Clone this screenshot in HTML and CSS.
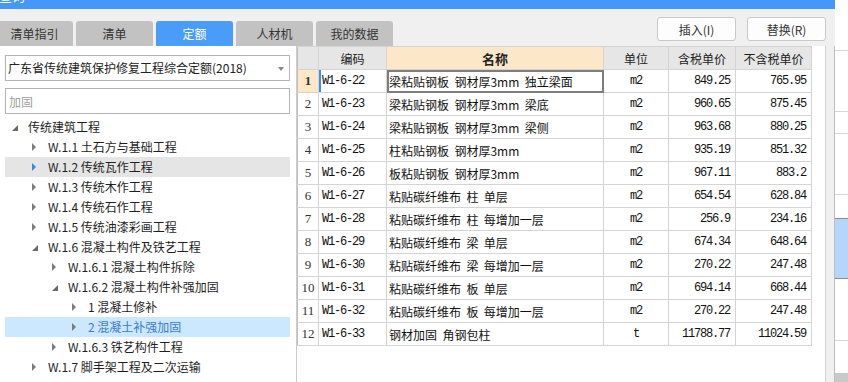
FILE: index.html
```html
<!DOCTYPE html>
<html lang="zh-CN">
<head>
  <meta charset="UTF-8">
  <title>定额查询</title>
  <link rel="stylesheet" href="styles.css">
</head>
<body>
  <div class="window">
    <div class="titlebar"><span class="title">查询</span></div>
    <div class="toolbar">
      <div class="tabs">
        <div class="tab">清单指引</div>
        <div class="tab">清单</div>
        <div class="tab active">定额</div>
        <div class="tab">人材机</div>
        <div class="tab">我的数据</div>
      </div>
      <div class="actions">
        <button class="btn">插入(I)</button>
        <button class="btn">替换(R)</button>
      </div>
    </div>
    <div class="main">
      <div class="side">
        <div class="select">广东省传统建筑保护修复工程综合定额(2018)<span class="caret"></span></div>
        <input class="search" placeholder="加固">
        <ul class="tree">
          <li class="node lv0"><span class="tw open"></span>传统建筑工程</li>
          <li class="node lv1"><span class="tw"></span>W.1.1 土石方与基础工程</li>
          <li class="node lv1 hover"><span class="tw"></span>W.1.2 传统瓦作工程</li>
          <li class="node lv1"><span class="tw"></span>W.1.3 传统木作工程</li>
          <li class="node lv1"><span class="tw"></span>W.1.4 传统石作工程</li>
          <li class="node lv1"><span class="tw"></span>W.1.5 传统油漆彩画工程</li>
          <li class="node lv1"><span class="tw open"></span>W.1.6 混凝土构件及铁艺工程</li>
          <li class="node lv2"><span class="tw"></span>W.1.6.1 混凝土构件拆除</li>
          <li class="node lv2"><span class="tw open"></span>W.1.6.2 混凝土构件补强加固</li>
          <li class="node lv3"><span class="tw"></span>1 混凝土修补</li>
          <li class="node lv3 selected"><span class="tw"></span>2 混凝土补强加固</li>
          <li class="node lv2"><span class="tw"></span>W.1.6.3 铁艺构件工程</li>
          <li class="node lv1"><span class="tw"></span>W.1.7 脚手架工程及二次运输</li>
        </ul>
      </div>
      <div class="grid-wrap">
        <table class="grid">
          <colgroup>
            <col class="c-no"><col class="c-code"><col class="c-name"><col class="c-unit"><col class="c-tax"><col class="c-net">
          </colgroup>
          <thead>
            <tr><th></th><th>编码</th><th class="h-name">名称</th><th>单位</th><th>含税单价</th><th>不含税单价</th></tr>
          </thead>
          <tbody>
            <tr class="current"><td class="no">1</td><td class="code">W1-6-22</td><td class="name">梁粘贴钢板&nbsp; 钢材厚3mm&nbsp; 独立梁面</td><td class="unit">m2</td><td class="num">849.25</td><td class="num">765.95</td></tr>
            <tr><td class="no">2</td><td class="code">W1-6-23</td><td class="name">梁粘贴钢板&nbsp; 钢材厚3mm&nbsp; 梁底</td><td class="unit">m2</td><td class="num">960.65</td><td class="num">875.45</td></tr>
            <tr><td class="no">3</td><td class="code">W1-6-24</td><td class="name">梁粘贴钢板&nbsp; 钢材厚3mm&nbsp; 梁侧</td><td class="unit">m2</td><td class="num">963.68</td><td class="num">880.25</td></tr>
            <tr><td class="no">4</td><td class="code">W1-6-25</td><td class="name">柱粘贴钢板&nbsp; 钢材厚3mm</td><td class="unit">m2</td><td class="num">935.19</td><td class="num">851.32</td></tr>
            <tr><td class="no">5</td><td class="code">W1-6-26</td><td class="name">板粘贴钢板&nbsp; 钢材厚3mm</td><td class="unit">m2</td><td class="num">967.11</td><td class="num">883.2</td></tr>
            <tr><td class="no">6</td><td class="code">W1-6-27</td><td class="name">粘贴碳纤维布&nbsp; 柱&nbsp; 单层</td><td class="unit">m2</td><td class="num">654.54</td><td class="num">628.84</td></tr>
            <tr><td class="no">7</td><td class="code">W1-6-28</td><td class="name">粘贴碳纤维布&nbsp; 柱&nbsp; 每增加一层</td><td class="unit">m2</td><td class="num">256.9</td><td class="num">234.16</td></tr>
            <tr><td class="no">8</td><td class="code">W1-6-29</td><td class="name">粘贴碳纤维布&nbsp; 梁&nbsp; 单层</td><td class="unit">m2</td><td class="num">674.34</td><td class="num">648.64</td></tr>
            <tr><td class="no">9</td><td class="code">W1-6-30</td><td class="name">粘贴碳纤维布&nbsp; 梁&nbsp; 每增加一层</td><td class="unit">m2</td><td class="num">270.22</td><td class="num">247.48</td></tr>
            <tr><td class="no">10</td><td class="code">W1-6-31</td><td class="name">粘贴碳纤维布&nbsp; 板&nbsp; 单层</td><td class="unit">m2</td><td class="num">694.14</td><td class="num">668.44</td></tr>
            <tr><td class="no">11</td><td class="code">W1-6-32</td><td class="name">粘贴碳纤维布&nbsp; 板&nbsp; 每增加一层</td><td class="unit">m2</td><td class="num">270.22</td><td class="num">247.48</td></tr>
            <tr><td class="no">12</td><td class="code">W1-6-33</td><td class="name">钢材加固&nbsp; 角钢包柱</td><td class="unit">t</td><td class="num">11788.77</td><td class="num">11024.59</td></tr>
          </tbody>
        </table>
      </div>
      <div class="gutter"></div>
    </div>
  </div>
  <div class="peek">
    <div class="pk pk-a"></div>
    <div class="pk pk-b"></div>
    <div class="pk pk-c"></div>
    <div class="pk pk-d"></div>
    <div class="pk pk-e"></div>
    <div class="pk pk-sel"></div>
    <div class="pk pk-f"></div>
    <div class="pk pk-g"></div>
    <div class="pk pk-bar"></div>
  </div>
</body>
</html>
```

FILE: styles.css
```css
* {
  box-sizing: border-box;
}

html,
body {
  margin: 0;
  padding: 0;
}

body {
  width: 848px;
  height: 382px;
  overflow: hidden;
  display: flex;
  background: #fff;
  font-family: "Noto Sans CJK SC", sans-serif;
  font-size: 12px;
  color: #222;
  --blue: #4598fa;
  --line: #d4d4d4;
}

.window {
  width: 835px;
  height: 382px;
  display: flex;
  flex-direction: column;
  background: #f0f0f0;
}

.titlebar {
  height: 9px;
  flex: none;
  background: var(--blue);
  color: #fff;
  overflow: hidden;
}
.titlebar .title {
  display: block;
  font-size: 13px;
  line-height: 16px;
  margin: -12px 0 0 -1px;
}

.toolbar {
  height: 37px;
  flex: none;
  display: flex;
  align-items: flex-end;
  justify-content: space-between;
  padding-right: 9px;
}

.tabs {
  display: flex;
  gap: 3px;
  margin-left: -4px;
}
.tab {
  width: 77px;
  height: 25px;
  line-height: 25px;
  text-align: center;
  background: #c2c2c2;
  color: #333;
  border-radius: 3px 3px 0 0;
}
.tab.active {
  background: #4a9cf9;
  color: #fff;
}

.actions {
  display: flex;
  gap: 11px;
  margin-bottom: 5px;
}
.btn {
  width: 79px;
  height: 24px;
  padding: 0;
  border: 1px solid #c8c8c8;
  border-radius: 3px;
  background: #fdfdfd;
  font: inherit;
  color: #333;
}

.main {
  flex: 1;
  display: flex;
  min-height: 0;
}

/* left: quota library tree */
.side {
  width: 297px;
  flex: none;
  background: #fff;
  border-right: 1px solid #cdcdcd;
  padding: 9px 6px 0 5px;
}

.select,
.search {
  display: block;
  width: 100%;
  height: 26px;
  border: 1px solid #b4b4b4;
  background: #fff;
  font: inherit;
  color: #222;
}
.select {
  position: relative;
  line-height: 24px;
  padding-left: 2px;
}
.caret {
  position: absolute;
  right: 5px;
  top: 11px;
  border-left: 3px solid transparent;
  border-right: 3px solid transparent;
  border-top: 4px solid #8a8a8a;
}
.search {
  margin-top: 7px;
  padding: 0 3px;
  outline: none;
}
.search::placeholder {
  color: #a0a0a0;
}

.tree {
  list-style: none;
  margin: 3px 0 0;
  padding: 0;
}
.node {
  height: 20px;
  line-height: 20px;
  display: flex;
  white-space: nowrap;
  color: #1e1e1e;
}
.lv0 { padding-left: 7px; }
.lv1 { padding-left: 27px; }
.lv2 { padding-left: 47px; }
.lv3 { padding-left: 67px; }

.node.hover {
  background: #e5e5e5;
}
.node.selected {
  background: #cce8ff;
  color: #3a7ccf;
}

.tw {
  width: 16px;
  height: 20px;
  flex: none;
  position: relative;
}
.tw::before {
  content: "";
  position: absolute;
  left: 0;
  top: 6px;
  border-left: 4px solid #7c7c7c;
  border-top: 4px solid transparent;
  border-bottom: 4px solid transparent;
}
.hover .tw::before {
  border-left-color: #2f8ae8;
}
.tw.open::before {
  top: 8px;
  border-left: 0;
  border-bottom: 0;
  border-right: 6px solid #6a6a6a;
  border-top: 6px solid transparent;
}

/* right: quota grid */
.grid-wrap {
  flex: 1;
  background: #fff;
  border-right: 1px solid #d0d0d0;
  overflow: hidden;
}

.grid {
  border-collapse: collapse;
  table-layout: fixed;
  width: 514px;
}
.c-no { width: 21px; }
.c-code { width: 68px; }
.c-name { width: 217px; }
.c-unit { width: 65px; }
.c-tax { width: 67px; }
.c-net { width: 76px; }

.grid th,
.grid td {
  height: 23px;
  padding: 0;
  border: 1px solid var(--line);
  white-space: nowrap;
  overflow: hidden;
}
.grid th:first-child,
.grid td:first-child {
  border-left-color: #bdbdbd;
}
.grid th {
  background: #e6e6e6;
  font-weight: normal;
  color: #222;
}
.grid th.h-name {
  background: #fde7c9;
  font-weight: bold;
  font-size: 13px;
}

.grid td {
  font-family: "Liberation Mono", monospace;
  font-size: 12px;
  letter-spacing: -1.2px;
  color: #111;
}
.grid td.no {
  text-align: center;
  font-family: "Liberation Serif", serif;
  font-size: 13px;
  letter-spacing: 0;
  color: #333;
}
.grid td.code {
  padding-left: 3px;
}
.grid td.name {
  padding-left: 2px;
  font-family: "Noto Sans CJK SC", sans-serif;
  font-size: 12px;
  letter-spacing: 0;
}
.grid td.unit {
  text-align: center;
}
.grid td.num {
  text-align: right;
  padding-right: 5px;
}

.current td.no {
  background: #fde7c9;
  font-weight: bold;
}
.current td.code {
  box-shadow: inset 2px 0 0 #3d8ef0;
}
.current td.name {
  outline: 2px solid #7d7d7d;
  outline-offset: -2px;
}

.gutter {
  width: 9px;
  flex: none;
  border-right: 1px solid #bdbdbd;
}

/* window behind, right edge */
.peek {
  width: 13px;
  flex: none;
  display: flex;
  flex-direction: column;
}
.pk {
  border-bottom: 1px solid #d6d6d6;
}
.pk-a { height: 51px; }
.pk-b { height: 61px; }
.pk-c { height: 22px; }
.pk-d { height: 61px; }
.pk-e { height: 24px; border-bottom-color: #8c8c8c; }
.pk-sel { height: 60px; background: #b5d5fc; border-bottom-color: #8c8c8c; }
.pk-f { height: 62px; }
.pk-g { flex: 1; border-bottom: 0; }
.pk-bar { height: 9px; background: #c9c9c9; border-bottom: 0; }
```
